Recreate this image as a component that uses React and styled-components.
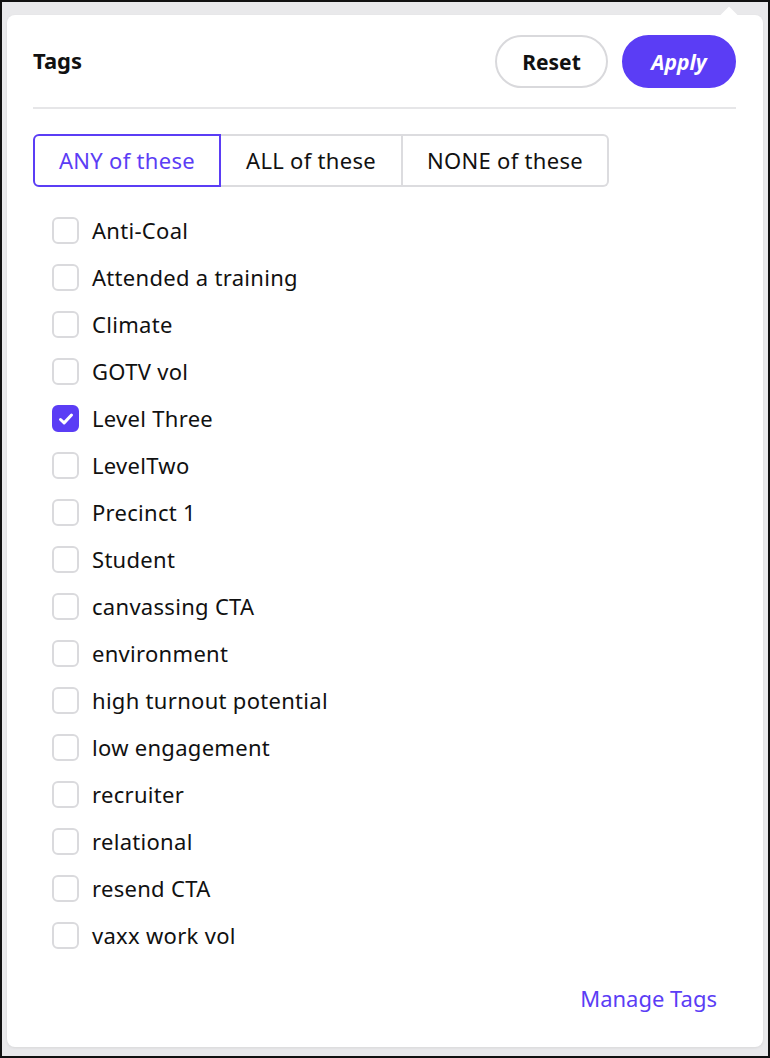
import React, { useState } from "react";
import styled, { createGlobalStyle } from "styled-components";

const Global = createGlobalStyle`
  html, body { margin: 0; padding: 0; }
  body { font-family: "Noto Sans", "Open Sans", sans-serif; color: #111; }
  * { box-sizing: border-box; }
`;

const PURPLE = "#5b3df5";

const Frame = styled.div`
  width: 770px;
  height: 1058px;
  border: 2px solid #111;
  background: #e9e9eb;
  padding: 13px 5px 9px 5px;
`;

const Popover = styled.div`
  position: relative;
  background: #fff;
  border-radius: 8px;
  height: 100%;
  box-shadow: 0 1px 3px rgba(0, 0, 0, 0.08);
  padding: 20px 27px 0 26px;
  display: flex;
  flex-direction: column;
`;

const Arrow = styled.div`
  position: absolute;
  top: -6px;
  right: 28px;
  width: 12px;
  height: 12px;
  background: #fff;
  transform: rotate(45deg);
`;

const Header = styled.div`
  display: flex;
  align-items: center;
  justify-content: space-between;
  padding-bottom: 19px;
  border-bottom: 2px solid #e6e6e8;
`;

const Title = styled.h2`
  margin: 0 0 4px 0;
  font-size: 22px;
  font-weight: 700;
  letter-spacing: 0;
`;

const Actions = styled.div`
  display: flex;
  gap: 14px;
`;

const Pill = styled.button`
  height: 53px;
  width: ${(p) => (p.$primary ? "114px" : "113px")};
  border-radius: 27px;
  font-family: inherit;
  font-size: 21px;
  font-weight: 700;
  font-style: ${(p) => (p.$primary ? "italic" : "normal")};
  color: ${(p) => (p.$primary ? "#fff" : "#111")};
  background: ${(p) => (p.$primary ? PURPLE : "#fff")};
  border: 2px solid ${(p) => (p.$primary ? PURPLE : "#d9d9dc")};
  cursor: pointer;
`;

const Segments = styled.div`
  display: flex;
  margin-top: 25px;
  align-self: flex-start;
`;

const Segment = styled.button`
  height: 53px;
  width: ${(p) => p.$w}px;
  padding-bottom: 2px;
  font-family: inherit;
  font-size: 22px;
  letter-spacing: 0.3px;
  background: #fff;
  color: ${(p) => (p.$active ? PURPLE : "#111")};
  border: 2px solid ${(p) => (p.$active ? PURPLE : "#dcdcdf")};
  border-left-width: ${(p) => (p.$first || p.$active ? 2 : 0)}px;
  border-radius: ${(p) => (p.$first ? "6px 0 0 6px" : p.$last ? "0 6px 6px 0" : "0")};
  cursor: pointer;
`;

const List = styled.ul`
  list-style: none;
  margin: 20px 0 0 0;
  padding: 0 0 0 19px;
`;

const Row = styled.li`
  height: 47px;
  display: flex;
  align-items: center;
  gap: 13px;
  font-size: 22px;
  letter-spacing: 0.3px;
  cursor: pointer;
`;

const Label = styled.span`
  margin-top: -2px;
`;

const Box = styled.span`
  width: 27px;
  height: 27px;
  border-radius: 6px;
  border: 2px solid ${(p) => (p.$checked ? PURPLE : "#dadadd")};
  background: ${(p) => (p.$checked ? PURPLE : "#fff")};
  display: flex;
  align-items: center;
  justify-content: center;
  flex: none;
`;

const Footer = styled.div`
  display: flex;
  justify-content: flex-end;
  padding: 24px 19px 0 0;
`;

const Link = styled.a`
  color: ${PURPLE};
  font-size: 22px;
  text-decoration: none;
  cursor: pointer;
`;

const tags = [
  "Anti-Coal",
  "Attended a training",
  "Climate",
  "GOTV vol",
  "Level Three",
  "LevelTwo",
  "Precinct 1",
  "Student",
  "canvassing CTA",
  "environment",
  "high turnout potential",
  "low engagement",
  "recruiter",
  "relational",
  "resend CTA",
  "vaxx work vol",
];

const modes = [
  { label: "ANY of these", w: 188 },
  { label: "ALL of these", w: 182 },
  { label: "NONE of these", w: 206 },
];

export default function App() {
  const [mode, setMode] = useState(0);
  const [checked, setChecked] = useState(new Set(["Level Three"]));
  const toggle = (t) => {
    const n = new Set(checked);
    n.has(t) ? n.delete(t) : n.add(t);
    setChecked(n);
  };
  return (
    <>
      <Global />
      <Frame>
        <Popover>
          <Arrow />
          <Header>
            <Title>Tags</Title>
            <Actions>
              <Pill>Reset</Pill>
              <Pill $primary>Apply</Pill>
            </Actions>
          </Header>
          <Segments>
            {modes.map((m, i) => (
              <Segment
                key={m.label}
                $w={m.w}
                $active={mode === i}
                $first={i === 0}
                $last={i === modes.length - 1}
                onClick={() => setMode(i)}
              >
                {m.label}
              </Segment>
            ))}
          </Segments>
          <List>
            {tags.map((t) => (
              <Row key={t} onClick={() => toggle(t)}>
                <Box $checked={checked.has(t)}>
                  {checked.has(t) && (
                    <svg width="18" height="18" viewBox="0 0 18 18">
                      <path d="M3.5 9.5l3.6 3.4L14.5 5" fill="none" stroke="#fff" strokeWidth="3" strokeLinecap="round" strokeLinejoin="round" />
                    </svg>
                  )}
                </Box>
                <Label>{t}</Label>
              </Row>
            ))}
          </List>
          <Footer>
            <Link>Manage Tags</Link>
          </Footer>
        </Popover>
      </Frame>
    </>
  );
}
